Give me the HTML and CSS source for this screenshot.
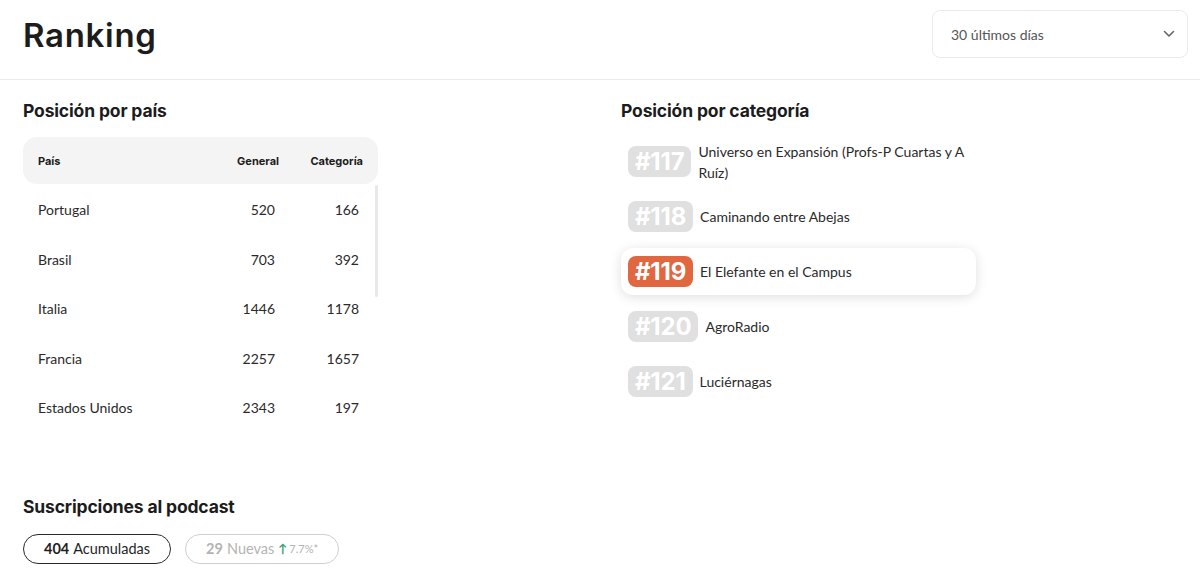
FILE: index.html
```html
<!DOCTYPE html>
<html lang="es">
<head>
<meta charset="utf-8">
<title>Ranking</title>
<link rel="stylesheet" href="styles.css">
</head>
<body>
<header class="topbar">
  <h1 class="title">Ranking</h1>
  <div class="select">
    <span>30 últimos días</span>
    <svg class="chev" width="12" height="8" viewBox="0 0 12 8"><path d="M1.5 1.5 L6 6 L10.5 1.5" fill="none" stroke="#666" stroke-width="1.6" stroke-linecap="round" stroke-linejoin="round"/></svg>
  </div>
</header>
<main class="content">
  <section class="col col-left">
    <h2 class="section-title">Posición por país</h2>
    <div class="table">
      <div class="thead">
        <span>País</span><span class="num">General</span><span class="num">Categoría</span>
      </div>
      <div class="tbody">
        <div class="row"><span>Portugal</span><span class="num">520</span><span class="num">166</span></div>
        <div class="row"><span>Brasil</span><span class="num">703</span><span class="num">392</span></div>
        <div class="row"><span>Italia</span><span class="num">1446</span><span class="num">1178</span></div>
        <div class="row"><span>Francia</span><span class="num">2257</span><span class="num">1657</span></div>
        <div class="row"><span>Estados Unidos</span><span class="num">2343</span><span class="num">197</span></div>
        <div class="thumb"></div>
      </div>
    </div>
  </section>
  <section class="col col-right">
    <h2 class="section-title">Posición por categoría</h2>
    <ul class="ranks">
      <li class="rank"><span class="badge">#117</span><span class="rank-name">Universo en Expansión (Profs-P Cuartas y A Ruíz)</span></li>
      <li class="rank"><span class="badge">#118</span><span class="rank-name">Caminando entre Abejas</span></li>
      <li class="rank current"><span class="badge">#119</span><span class="rank-name">El Elefante en el Campus</span></li>
      <li class="rank"><span class="badge">#120</span><span class="rank-name">AgroRadio</span></li>
      <li class="rank"><span class="badge">#121</span><span class="rank-name">Luciérnagas</span></li>
    </ul>
  </section>
</main>
<section class="subs">
  <h2 class="section-title">Suscripciones al podcast</h2>
  <div class="pills">
    <span class="pill active"><b>404</b> Acumuladas</span>
    <span class="pill"><b>29</b> Nuevas <span class="up">↑</span><small>7.7%*</small></span>
  </div>
</section>
</body>
</html>
```
FILE: styles.css
```css
* { box-sizing: border-box; }
body {
  margin: 0;
  background: #fff;
  color: #1f1f1f;
  font-family: "Lato", "Inter", sans-serif;
  font-size: 14px;
}
.topbar {
  height: 80px;
  border-bottom: 1px solid #ebebeb;
  display: flex;
  align-items: flex-start;
  justify-content: space-between;
  padding: 10px 12px 0 23px;
}
.title {
  margin: 5px 0 0;
  font-family: "Inter", sans-serif;
  font-weight: 600;
  font-size: 33px;
  line-height: 40px;
  letter-spacing: 0.7px;
  color: #1c1c1c;
}
.select {
  width: 256px;
  height: 48px;
  border: 1px solid #ebebeb;
  border-radius: 8px;
  display: flex;
  align-items: center;
  justify-content: space-between;
  padding: 0 12px 0 18px;
  color: #555;
  font-size: 14px;
}
.content {
  display: flex;
  gap: 243px;
  padding: 20px 23px 0;
}
.col { width: 355px; }
.section-title {
  margin: 0;
  font-family: "Inter", sans-serif;
  font-size: 17.5px;
  line-height: 22px;
  font-weight: 700;
  color: #1c1c1c;
  letter-spacing: -0.15px;
}
.table { margin-top: 15px; }
.thead, .row {
  display: grid;
  grid-template-columns: 1fr 80px 84px;
  align-items: center;
  padding: 0 15px;
}
.thead {
  height: 47px;
  background: #f4f4f4;
  border-radius: 14px;
  font-family: "Inter", sans-serif;
  font-size: 11px;
  font-weight: 700;
  color: #1c1c1c;
}
.tbody {
  position: relative;
  width: 351px;
  margin-top: 1px;
}
.row {
  height: 49.5px;
  color: #2a2a2a;
}
.num { text-align: right; }
.thumb {
  position: absolute;
  right: -4px;
  top: 0;
  width: 3px;
  height: 112px;
  background: #e8e8e8;
  border-radius: 2px;
}
.ranks {
  list-style: none;
  margin: 16px 0 0;
  padding: 0;
  display: flex;
  flex-direction: column;
  gap: 8px;
}
.rank {
  display: flex;
  align-items: center;
  gap: 7px;
  min-height: 47px;
  padding: 0 7px;
  border-radius: 12px;
}
.rank.current {
  box-shadow: 0 2px 12px rgba(0,0,0,0.13);
}
.badge {
  flex: none;
  height: 31px;
  line-height: 31px;
  padding: 0 7px;
  border-radius: 8px;
  background: #e0e0e0;
  color: #fff;
  font-family: "Inter", sans-serif;
  font-weight: 700;
  font-size: 24px;
  letter-spacing: -0.2px;
}
.current .badge { background: #e0673f; }
.rank-name {
  line-height: 21px;
  color: #2a2a2a;
  max-width: 272px;
}
.subs {
  padding: 63px 23px 0;
}
.pills {
  display: flex;
  gap: 14px;
  margin-top: 16px;
}
.pill {
  height: 30px;
  border: 1px solid #cfcfcf;
  border-radius: 15px;
  padding: 0 20px;
  display: flex;
  align-items: center;
  gap: 4px;
  color: #b3b3b3;
  font-size: 14.5px;
}
.pill b { font-weight: 700; }
.pill.active {
  border-color: #2a2a2a;
  color: #1f1f1f;
}
.up { color: #3a9e73; font-size: 12px; font-weight: 700; }
.pill small { font-size: 11px; margin-left: -2px; }
```
